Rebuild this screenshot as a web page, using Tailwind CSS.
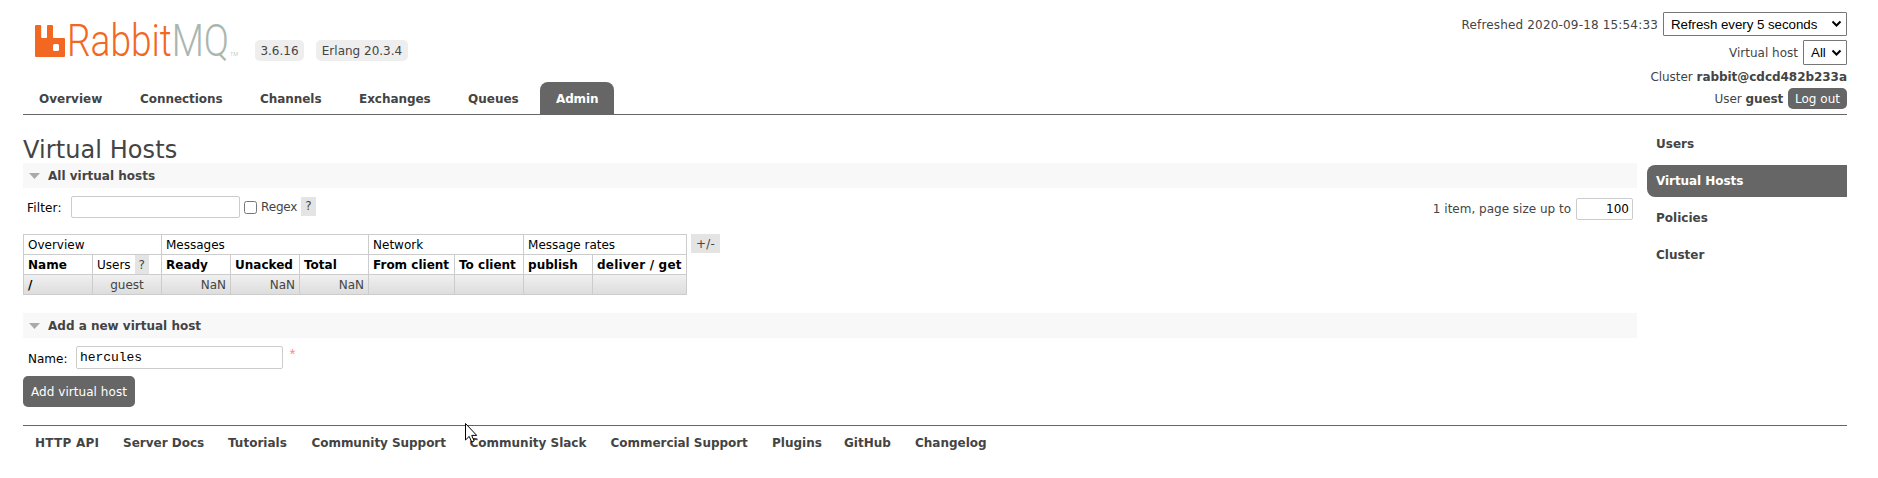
<!DOCTYPE html>
<html lang="en">
<head>
<meta charset="utf-8">
<title>RabbitMQ Management</title>
<script src="https://cdn.jsdelivr.net/npm/@tailwindcss/browser@4"></script>
</head>
<body class="h-[478px] overflow-hidden bg-white px-[23px] pr-[31px] font-['Verdana','DejaVu_Sans',sans-serif] text-[12px] leading-[16px] text-[#444]">
<header class="flex h-[115px] justify-between border-b border-[#666]">
  <div class="flex flex-col justify-between">
    <div class="flex h-[62px] items-end pl-[12px] text-[12px]">
      <svg class="mb-[2px] h-[40px] w-[205px] overflow-visible" viewBox="35 20 205 40">
        <path fill="#f26822" d="M36 25h4.200q1 0 1 1v11q0 1 1 1h3.800q1 0 1-1v-11q0-1 1-1h4q1 0 1 1v11q0 1 1 1h10q1 0 1 1v17q0 1-1 1h-28q-1 0-1-1v-30q0-1 1-1z"/>
        <rect x="53" y="44" width="6" height="7" rx="1.500" fill="#fff"/>
        <text x="67" y="56" font-family="Roboto" font-weight="300" font-size="45" fill="#f26822" textLength="162" lengthAdjust="spacingAndGlyphs">Rabbit<tspan fill="#a9b7b0">MQ</tspan></text>
        <text x="230" y="56" font-family="Roboto" font-weight="300" font-size="6" fill="#a9b7b0" textLength="8" lengthAdjust="spacingAndGlyphs">TM</text>
      </svg>
      <span class="mb-[1px] ml-[15px] h-[21px] w-[49px] rounded-[5px] bg-[#eee] text-center leading-[22px]">3.6.16</span>
      <span class="mb-[1px] ml-[12px] h-[21px] w-[92px] rounded-[5px] bg-[#eee] text-center leading-[22px] whitespace-nowrap">Erlang 20.3.4</span>
    </div>
    <nav class="flex h-[32px] font-bold leading-[34px] *:pl-[16px]">
      <a class="w-[101px]">Overview</a>
      <a class="w-[120px] tracking-[-0.050px]">Connections</a>
      <a class="w-[99px] tracking-[-0.050px]">Channels</a>
      <a class="w-[109px] tracking-[-0.050px]">Exchanges</a>
      <a class="w-[88px]">Queues</a>
      <a class="w-[74px] rounded-t-[8px] bg-[#666] tracking-[-0.150px] text-white">Admin</a>
    </nav>
  </div>
  <div class="flex flex-col items-end pt-[12px]">
    <div class="flex h-[24px] items-center gap-[5px]"><span class="pt-[1px] tracking-[0.170px]">Refreshed 2020-09-18 15:54:33</span>
      <div class="flex h-[24px] w-[184px] items-center justify-between rounded-[1px] border border-[#767676] pr-[4px] pl-[7px] font-['Liberation_Sans',sans-serif] text-[13.33px] tracking-[-0.050px] text-black"><span class="pt-[1px]">Refresh every 5 seconds</span><svg width="11" height="8" viewBox="0 0 11 8" fill="none" stroke="#000" stroke-width="2"><path d="M1.500 1.500l4 4 4-4"/></svg></div>
    </div>
    <div class="mt-[4px] flex h-[25px] items-center gap-[5px]"><span>Virtual host</span>
      <div class="flex h-[25px] w-[44px] items-center justify-between rounded-[1px] border border-[#767676] pr-[4px] pl-[7px] font-['Liberation_Sans',sans-serif] text-[13.33px] text-black"><span>All</span><svg width="11" height="8" viewBox="0 0 11 8" fill="none" stroke="#000" stroke-width="2"><path d="M1.500 1.500l4 4 4-4"/></svg></div>
    </div>
    <div class="mt-[4px] h-[16px] tracking-[-0.040px]">Cluster <b>rabbit@cdcd482b233a</b></div>
    <div class="mt-[3px] flex h-[21px] items-center gap-[5px]"><span>User <b class="tracking-[-0.150px]">guest</b></span><button class="h-[21px] w-[59px] rounded-[5px] bg-[#666] text-white">Log out</button></div>
  </div>
</header>
<div class="flex h-[310px] justify-between">
  <main class="w-[1614px] pt-[20px]">
    <h1 class="h-[28px] text-[24px] leading-[30px] tracking-[0.080px]">Virtual Hosts</h1>
    <h2 class="flex h-[25px] items-center bg-[#f8f8f8] pl-[6px] font-bold"><svg class="mr-[8px]" width="11" height="6" viewBox="0 0 11 6" fill="#aaa"><path d="M0 0h11L5.500 6z"/></svg>All virtual hosts</h2>
    <div class="flex h-[46px] items-start justify-between pt-[8px] pr-[4px] pl-[4px]">
      <div class="flex items-center">
        <label class="w-[44px] pt-[1px] tracking-[0.150px] text-black">Filter:</label>
        <input class="h-[22px] w-[169px] rounded-[2px] border border-[#ccc]">
        <span class="ml-[4px] h-[13px] w-[13px] rounded-[2.500px] border border-[#767676]"></span>
        <span class="ml-[4px] w-[40px] tracking-[-0.150px]">Regex</span>
        <span class="mb-[1px] h-[19px] w-[15px] bg-[#e4e4e4] text-center leading-[19px]">?</span>
      </div>
      <div class="mt-[2px] flex items-center gap-[5px]"><span>1 item, page size up to</span><input class="h-[22px] w-[57px] rounded-[2px] border border-[#ccc] pr-[3px] text-right font-['DejaVu_Sans',sans-serif] text-[12px] text-black" value="100"></div>
    </div>
    <div class="flex h-[79px] items-start gap-[4px]">
      <table class="w-[664px] table-fixed border-collapse text-left text-black [&_td]:h-[20px] [&_td]:border [&_td]:border-[#ccc] [&_td]:px-[4px] [&_td]:py-0 [&_td]:leading-[18px] [&_th]:h-[20px] [&_th]:border [&_th]:border-[#ccc] [&_th]:px-[4px] [&_th]:py-0 [&_th]:leading-[18px] [&_th]:whitespace-nowrap">
        <colgroup><col class="w-[69px]"><col class="w-[69px]"><col class="w-[69px]"><col class="w-[69px]"><col class="w-[69px]"><col class="w-[86px]"><col class="w-[69px]"><col class="w-[69px]"><col class="w-[94px]"></colgroup>
        <tbody>
        <tr><td colspan="2">Overview</td><td colspan="3">Messages</td><td colspan="2">Network</td><td colspan="2">Message rates</td></tr>
        <tr><th>Name</th><td><div class="flex h-[19px] gap-[4px] leading-[20px]">Users <span class="h-[19px] w-[14px] bg-[#e4e4e4] text-center text-[#444]">?</span></div></td><th>Ready</th><th>Unacked</th><th>Total</th><th>From client</th><th>To client</th><th>publish</th><th class="tracking-[0.200px]">deliver / get</th></tr>
        <tr class="bg-linear-to-b from-[#f0f0f0] to-[#dcdcdc] text-[#444]"><td class="font-bold text-black">/</td><td class="text-center">guest</td><td class="text-right">NaN</td><td class="text-right">NaN</td><td class="text-right">NaN</td><td></td><td></td><td></td><td></td></tr>
        </tbody>
      </table>
      <span class="h-[19px] w-[29px] bg-[#e4e4e4] text-center leading-[20px] tracking-[0.300px]">+/-</span>
    </div>
    <h2 class="flex h-[25px] items-center bg-[#f8f8f8] pl-[6px] font-bold"><svg class="mr-[8px]" width="11" height="6" viewBox="0 0 11 6" fill="#aaa"><path d="M0 0h11L5.500 6z"/></svg>Add a new virtual host</h2>
    <div class="mt-[8px] flex h-[23px] items-center pl-[5px]">
      <label class="w-[48px] pt-[2px] text-black">Name:</label>
      <input class="h-[23px] w-[207px] rounded-[2px] border border-[#ccc] pl-[3px] font-['Liberation_Mono',monospace] text-[13px] tracking-[-0.050px] text-black" value="hercules">
      <span class="mb-[2px] ml-[5px] font-['Liberation_Mono',monospace] text-[15px] text-[#f88]">*</span>
    </div>
    <button class="mt-[7px] h-[31px] w-[112px] rounded-[5px] bg-[#666] tracking-[0.050px] text-white whitespace-nowrap">Add virtual host</button>
  </main>
  <aside class="flex w-[200px] flex-col gap-[5px] pt-[13px] font-bold leading-[32px] *:h-[32px] *:pl-[9px]">
    <a>Users</a>
    <a class="rounded-l-[8px] bg-[#666] tracking-[-0.060px] text-white">Virtual Hosts</a>
    <a>Policies</a>
    <a>Cluster</a>
  </aside>
</div>
<footer class="relative flex border-t border-[#666] pt-[9px] pl-[12px] font-bold whitespace-nowrap">
  <a class="w-[88px] tracking-[0.250px]">HTTP API</a><a class="w-[105px]">Server Docs</a><a class="w-[83.5px]">Tutorials</a><a class="w-[158px] tracking-[-0.050px]">Community Support</a><a class="w-[141px]">Community Slack</a><a class="w-[161.500px] tracking-[-0.040px]">Commercial Support</a><a class="w-[72px]">Plugins</a><a class="w-[71px]">GitHub</a><a>Changelog</a>
  <svg class="absolute top-[-3px] left-[442px]" width="13" height="20" viewBox="0 0 13 20"><path d="M.5.500v16.500l3.700-3.600 2.500 5.600 2.500-1-2.500-5.600h5z" fill="#fff" stroke="#000"/></svg>
</footer>
</body>
</html>
